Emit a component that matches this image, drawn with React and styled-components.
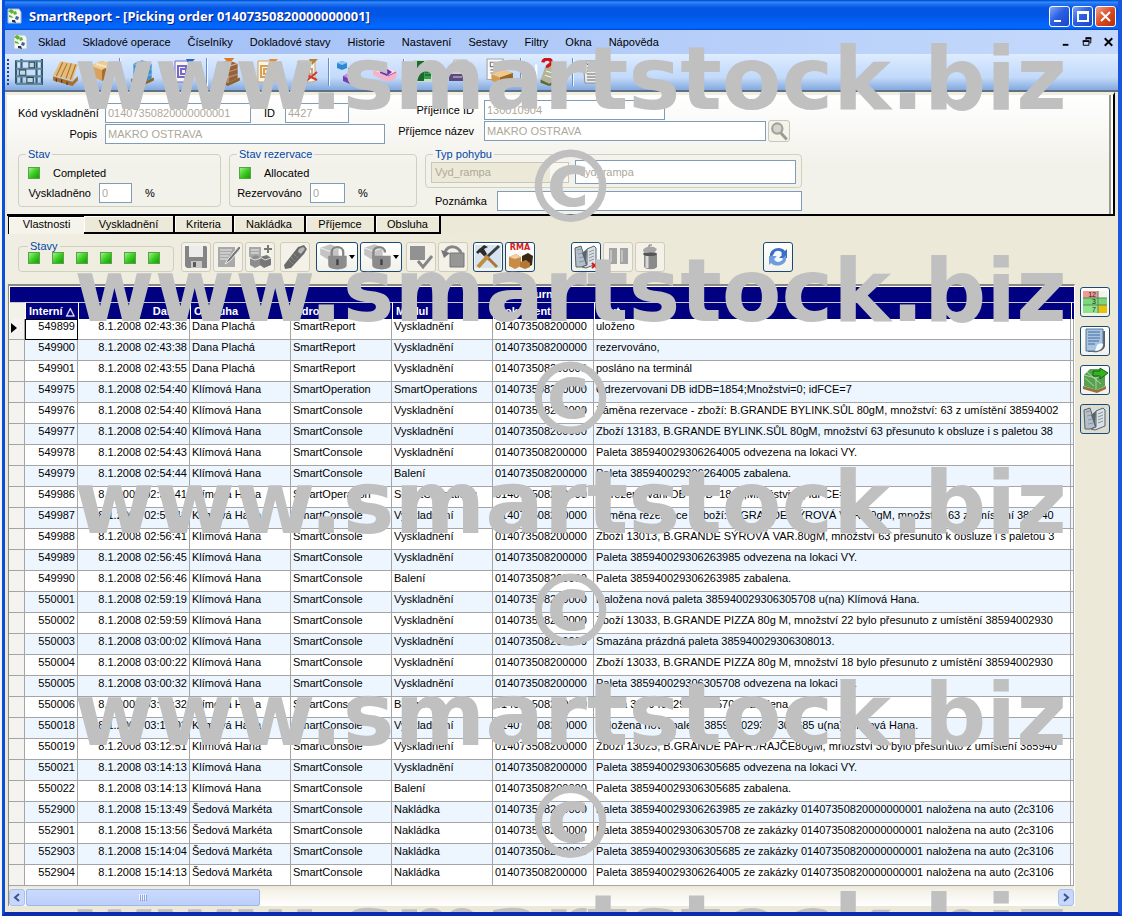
import React from 'react';
import styled, { createGlobalStyle, css } from 'styled-components';

const GlobalStyle = createGlobalStyle`
    * {
        box-sizing: border-box;
    }
    body {
        margin: 0;
        background: #f4f6fb;
        color: #000;
        font-family: 'Liberation Sans', Arial, sans-serif;
        font-size: 11px;
    }
    button, input, select {
        font: inherit;
        color: inherit;
    }
`;

const Window = styled.div`
    position: relative;
    display: flex;
    flex-direction: column;
    min-height: 100vh;
    margin-left: 2px;
    overflow: hidden;
    background: #ece9d8;
    border: solid #0b4fd8;
    border-width: 0 4px 4px 3px;
    border-right-color: #1a56e0;
    border-bottom-color: #0a2cae;
`;

const TitleBar = styled.header`
    display: flex;
    align-items: center;
    height: 30px;
    margin: 0 -3px;
    padding: 2px 5px 0 4px;
    color: #fff;
    background: linear-gradient(#0058d8 0, #0058d8 1px, #3d95ff 2px, #2a7af2 3px, #0355e4 8px, #0256e6 15px, #0268fe 26px, #0267fb 28px, #0044cc 30px);
`;

const Title = styled.h1`
    flex: 1;
    margin: 0 0 0 7px;
    font: bold 13px 'Noto Sans', sans-serif;
    text-shadow: 1px 1px 0 #0a1f84;
    white-space: nowrap;
`;

const CaptionButton = styled.button`
    display: flex;
    width: 21px;
    height: 21px;
    margin-left: 2px;
    padding: 0;
    border: 1px solid #fff;
    border-radius: 3px;
    background: ${props =>
        props.$danger
            ? 'linear-gradient(135deg, #f0a38c, #dc4a22 50%, #b62d0c)'
            : 'linear-gradient(135deg, #7fa8f5, #2a5fe4 45%, #1c45c4)'};
`;

const MenuBar = styled.nav`
    display: flex;
    align-items: center;
    height: 24px;
    padding: 0 0 0 7px;
    background: linear-gradient(90deg, #9ebcf5, #c4d9fb);
`;

const MenuLink = styled.a`
    margin-left: 17px;
    color: #000;
    text-decoration: none;
    white-space: nowrap;

    &:first-of-type {
        margin-left: 10px;
    }
`;

const ChildButtons = styled.div`
    display: flex;
    gap: 2px;
    margin-left: auto;

    button {
        display: flex;
        width: 19px;
        height: 16px;
        padding: 0 2px;
        border: 0;
        background: none;
    }
`;

const Toolbar = styled.div`
    display: flex;
    align-items: center;
    height: 38px;
    padding-left: 2px;
    border-bottom: 2px solid #5d7187;
    background: linear-gradient(#deecff, #cbe0fd 40%, #c3dafa 65%, #84a9de);
`;

const Grip = styled.div`
    width: 3px;
    height: 26px;
    border-left: 2px dotted #27408b;
`;

const ToolGroup = styled.div`
    display: flex;
    justify-content: space-around;
    width: ${props => props.$width}px;
    border-right: ${props => (props.$last ? '0' : '1px solid #6a8ccb')};
    box-shadow: ${props => (props.$last ? 'none' : '1px 0 0 #f1f9ff')};
`;

const ToolButton = styled.button`
    display: flex;
    padding: 0;
    border: 0;
    background: none;
`;

const FormPanel = styled.form`
    display: flex;
    flex-direction: column;
    height: 124px;
    margin: 0 3px 0 2px;
    padding: 5px 0 0 11px;
    border: solid #000;
    border-width: 0 2px 2px 0;
    border-top: 3px solid #f1eee0;
    box-shadow: inset -2px 0 0 #fff, inset -4px 0 0 #9b9a8c;
    background: linear-gradient(#fff, #f2f1ea 60%);
`;

const FormLine = styled.div`
    display: flex;
    height: ${props => props.$height || 20}px;
    margin-bottom: 1px;
    align-items: center;
`;

const StateLine = styled(FormLine)`
    padding: 3px 0 0 2px;
`;

const TopBlock = styled.div`
    display: flex;
    height: 48px;
`;

const LeftColumn = styled.div`
    width: 367px;
    padding-top: 3px;
`;

const BottomBlock = styled.div`
    display: flex;
    gap: 8px;
    height: 64px;
`;

const Label = styled.label`
    flex: none;
    width: ${props => props.$width}px;
    padding-right: ${props => props.$pad || 8}px;
    text-align: right;
    white-space: nowrap;
`;

const Field = styled.input`
    width: ${props => props.$width}px;
    height: ${props => props.$height || 20}px;
    padding: 0 2px;
    border: 1px solid #7f9db9;
    background: #fff;
    color: #aca899;
`;

const TypeSelect = styled.select`
    width: 138px;
    height: 21px;
    margin-right: 6px;
    padding: 0 3px;
    appearance: none;
    opacity: 1;
    border: 1px solid #c9c7ba;
    color: #aca899;
    background: linear-gradient(#f7f6ef, #f7f6ef) right / 18px 100% no-repeat #ece9d8;
`;

const LookupButton = styled.button`
    display: flex;
    align-items: center;
    justify-content: center;
    width: 22px;
    height: 22px;
    margin-left: 2px;
    padding: 0;
    border: 1px solid #c9c7ba;
    border-radius: 3px;
    background: #f5f4ea;
`;

const Group = styled.fieldset`
    flex: none;
    width: ${props => props.$width}px;
    height: ${props => props.$height}px;
    min-width: 0;
    margin: 0;
    padding: 0 ${props => props.$pad || 7}px;
    border: 1px solid #d0d0bf;
    border-radius: 4px;
`;

const Legend = styled.legend`
    margin-left: ${props => props.$shift || 0}px;
    padding: 0 2px;
    line-height: 12px;
    color: #0046a8;
`;

const Led = styled.span`
    flex: none;
    width: 12px;
    height: 12px;
    border: 1px solid #58a348;
    background: linear-gradient(135deg, #9cf28a, #3ccc22 50%, #189c06);
`;

const StateText = styled.span`
    margin-left: 13px;
`;

const TabList = styled.div`
    display: flex;
    height: 18px;
    margin-left: 3px;
`;

const Tab = styled.button`
    width: ${props => props.$width}px;
    padding: 0;
    border: solid #000;
    border-width: 0 2px 2px 0;
    box-shadow: inset 1px 1px 0 #fff;
    background: #ece9d8;

    ${props =>
        props.$active &&
        css`
            padding-bottom: 3px;
            border-width: 1px 0 0 1px;
            background: #f6f4ea;
        `}
`;

const ActionBar = styled.div`
    display: flex;
    align-items: flex-end;
    height: 50px;
    padding: 0 0 12px 13px;
    background: linear-gradient(90deg, #f0eee2, #ece9d8 50%);
`;

const ActionGroup = styled.div`
    display: flex;
    gap: 2px;
    margin-left: ${props => props.$gap}px;
`;

const LedRow = styled.div`
    display: flex;
    gap: 12px;
`;

const IconButton = styled.button`
    display: flex;
    align-items: center;
    justify-content: center;
    width: ${props => (props.$menu ? 42 : 30)}px;
    height: 30px;
    padding: 0;
    border: 1px solid ${props => (props.disabled ? '#cfccbc' : '#1c4a78')};
    border-radius: 3px;
    background: ${props =>
        props.disabled ? '#f4f2e8' : props.$pressed ? '#dcdbd0' : 'linear-gradient(#fff, #f2f1ea)'};
`;

const Work = styled.main`
    display: flex;
    flex: 1;
    padding: 0 8px 6px 3px;
`;

const GridFrame = styled.section`
    flex: 1;
    min-width: 0;
    border: solid #8a8a80;
    border-width: 2px 0 0 1px;
    border-right: 1px solid #fff;
    background: #fff;
`;

const Journal = styled.table`
    width: 100%;
    table-layout: fixed;
    border-collapse: separate;
    border-spacing: 0;
    white-space: nowrap;

    caption {
        height: 16px;
        border: solid #fff;
        border-width: 1px 0 0 1px;
        line-height: 15px;
        font-weight: bold;
        color: #fff;
        background: #000080;
    }
`;

const HeadCell = styled.th`
    height: 17px;
    padding: 0 3px;
    overflow: hidden;
    border-top: 1px solid #c8c8d0;
    border-left: 1px solid #fff;
    line-height: 15px;
    text-align: ${props => props.$align || 'left'};
    color: #fff;
    background: ${props => (props.$blank ? '#f2f1ea' : '#000080')};
`;

const Cell = styled.td`
    height: 21px;
    padding: 0 2px;
    overflow: hidden;
    vertical-align: top;
    line-height: 15px;
    text-align: ${props => props.$align || 'left'};
    border: solid #a5a5a5;
    border-width: 0 1px 1px 0;
    outline: ${props => (props.$current ? '1px solid #000' : 'none')};
    outline-offset: -1px;
    background: ${props => (props.$odd ? '#edf6ff' : '#fff')};
`;

const Selector = styled(Cell)`
    background: #f4f3f0;
    line-height: 20px;
`;

const ScrollTrack = styled.div`
    display: flex;
    height: 20px;
    padding-top: 3px;
    background: linear-gradient(#ece9d8, #f4f2e8 5px, #fff);
`;

const ScrollButton = styled.button`
    width: 16px;
    height: 17px;
    padding: 0;
    display: flex;
    align-items: center;
    justify-content: center;
    border: 1px solid #a8bff0;
    border-radius: 3px;
    background: #c8d8fc;

    &:last-child {
        margin-left: auto;
    }
`;

const Thumb = styled.div`
    display: flex;
    align-items: center;
    justify-content: center;
    width: 22%;
    height: 17px;
    margin-left: 1px;
    border: 1px solid #9db6ee;
    border-radius: 2px;
    background: linear-gradient(#cbdafd, #bccffa);
`;

const SideBar = styled.aside`
    display: flex;
    flex-direction: column;
    gap: 9px;
    padding: 3px 0 0 5px;
`;

const Watermark = styled.div`
    position: absolute;
    z-index: 5;
    top: 26px;
    left: 18px;
    right: 0;
    pointer-events: none;
    text-align: center;
    font: bold 87px/106px 'DejaVu Sans', sans-serif;
    color: #c0c0c0;
`;

const Copyright = styled.div`
    padding-top: 6px;
    font-size: 99px;
    line-height: 100px;
`;

const Icon = ({ size = 26, children }) => (
    <svg width={size} height={size} viewBox="0 0 26 26" fill="none" aria-hidden="true">
        {children}
    </svg>
);

const Logo = () => (
    <svg width="16" height="16" viewBox="0 0 16 16" aria-hidden="true">
        <path d="M2 1h11l2 3v11H2z" fill="#f4f8f0" stroke="#aebbd0" />
        <path d="M2 3l3-2 3 2-2 3zM7 4l3-1 1 3-3 1zM3 7l3 1 1 2-4-1z" fill="#5cb531" />
        <path d="M10 8l3 1-1 3-3-1z" fill="#3c5fa8" />
        <path d="M6 12l3 0 1 3-4-1z" fill="#22355e" />
    </svg>
);

const Rack = () => (
    <Icon size={28}>
        <path d="M1 2v22M6 1v24M20 2v22M25 1v24" stroke="#355b70" strokeWidth="2" />
        <path d="M1 3h24M1 10h24M1 17h24M1 24h24" stroke="#5f8799" strokeWidth="2" />
        <path d="M4 11h6v5H4zM11 18h6v5h-6zM13 4h5v5h-5z" fill="#c4d6df" stroke="#28485b" />
    </Icon>
);

const Pallet = () => (
    <Icon size={28}>
        <path d="M8 3l16 3-5 15L1 16z" fill="#e6bd78" />
        <path d="M10 4L4 17M14 5L8 18M18 5l-5 14M22 6l-5 14" stroke="#a87436" strokeWidth="1" />
        <path d="M1 17l18 5 5-5v4l-5 5L1 21z" fill="#a8702c" />
        <path d="M4 19v3M9 20v3M14 22v3" stroke="#4d2f10" />
    </Icon>
);

const Box = () => (
    <Icon>
        <path d="M2 8l10-5 12 3v11l-11 6-11-5z" fill="#d9a25f" />
        <path d="M2 8l11 4 11-6-12-3z" fill="#f0cb93" />
        <path d="M13 12v11l11-6V6z" fill="#a96c30" />
        <path d="M7 6l11 3v4" stroke="#f6e4bf" strokeWidth="2" />
    </Icon>
);

const Load = ({ color = '#3f8fd0', top }) => (
    <Icon size={28}>
        <path d="M5 5l8-3 9 3v14l-9 4-8-4z" fill={color} />
        <path d="M5 5l8 3v15M13 8l9-3" stroke="#fff" opacity=".5" />
        <path d="M5 10l8 3 9-3M5 15l8 3 9-3" stroke="#d7ecfa" opacity=".4" />
        <path d="M3 19l10 4 11-5v3l-11 5-10-4z" fill="#8b6428" />
        {top && <path d="M9 0h10l-5 5z" fill={top} />}
    </Icon>
);

const Sheet = ({ color, top, mark }) => (
    <Icon>
        <path d="M3 3h17v20l-3 1H3z" fill="#f7f4ea" stroke={color} />
        <path d="M6 8h8v11H6zM9 11h8v5H9z" stroke={color} strokeWidth="2" />
        {top && <path d="M14 1h9l-6 6z" fill={top} />}
        {mark && <path d="M8 15l14 7M22 14L10 24" stroke={mark} strokeWidth="2" />}
    </Icon>
);

const Cubes = () => (
    <Icon>
        <path d="M2 4l5-2 5 2v5l-5 2-5-2z" fill="#2f88d4" />
        <path d="M2 4l5 2 5-2-5-2z" fill="#8cc8f4" />
        <path d="M13 9l5-2 5 2v6l-5 2-5-2z" fill="#5673c8" />
        <path d="M8 17l6-3 9 3v5l-8 3-7-3z" fill="#7b3bb0" />
        <path d="M8 17l6-3 9 3-8 3z" fill="#c18ce4" />
    </Icon>
);

const Eraser = () => (
    <Icon>
        <path d="M1 11l8-5 16 7-1 6-8 4L1 16z" fill="#f3b3c8" />
        <path d="M1 11l8-5 16 7-8 4z" fill="#ffe1e6" />
        <path d="M8 11l6-2 6 4-5 4-7-3z" fill="#6f35b8" />
        <path d="M16 17l8-4" stroke="#b04c86" />
    </Icon>
);

const Door = () => (
    <Icon>
        <path d="M3 2h19v22H3z" fill="#c9dcc9" />
        <path d="M7 3h7v20H7z" fill="#176c2b" />
        <path d="M14 9h7v12h-7z" fill="#35a24a" />
        <path d="M15 11h3v3h-3zM15 17h6" stroke="#0c4a1b" />
    </Icon>
);

const Printer = () => (
    <Icon>
        <path d="M6 2h13l2 8H4z" fill="#f1f1ee" stroke="#b8b4b0" />
        <path d="M1 12l5-3h14l5 3v10H1z" fill="#d7c9cc" />
        <path d="M1 16h24v7H1z" fill="#5b4a7c" />
        <path d="M5 19h9" stroke="#d7d2e8" />
    </Icon>
);

const BoxSheet = () => (
    <Icon size={28}>
        <path d="M1 1h15v19H1z" fill="#fafafa" stroke="#a5a5a5" />
        <path d="M4 4h5v4H4zM4 11h8M4 14h7M11 5h3" stroke="#777" />
        <path d="M5 15l8-5 12 4v6l-12 5-8-4z" fill="#d49a52" />
        <path d="M5 15l8-5 12 4-12 4z" fill="#efc98c" />
        <path d="M13 18v7l12-5v-6z" fill="#9c6524" />
    </Icon>
);

const Question = () => (
    <Icon size={28}>
        <path d="M11 9l6-2 7 5v8l-9 5-8-4z" fill="#b3b39a" />
        <path d="M7 20l8 4 10-5v3l-10 4-8-3z" fill="#5c6b2e" />
        <path d="M12 12l10 3M11 16l10 3" stroke="#f2f2e0" />
        <path d="M9 4c1-4 8-4 8 0 0 3-4 2-4 5" stroke="#d01414" strokeWidth="3" />
        <path d="M3 6v13" stroke="#fff" strokeWidth="2" />
    </Icon>
);

const Report = () => (
    <Icon>
        <path d="M3 2h18v22H5z" fill="#ededed" stroke="#8f8f8f" />
        <path d="M5 2l3 4 3-4M14 2l3 4 3-4" stroke="#555" />
        <path d="M7 9h11M7 12h11M7 15h11M7 18h11M7 21h9" stroke="#666" />
    </Icon>
);

const Floppy = () => (
    <Icon>
        <path d="M2 2h21l1 1v21H4l-2-2z" fill="#858585" />
        <path d="M6 2h14v11H6z" fill="#ececec" />
        <path d="M8 17h11v7H8z" fill="#c7c7c7" />
        <path d="M10 18h3v5h-3z" fill="#5b5b5b" />
    </Icon>
);

const EditPage = () => (
    <Icon>
        <path d="M3 3h17v20H3z" fill="#a9a9a9" />
        <path d="M5 6h12M5 9h11M5 12h9M5 15h7" stroke="#ececec" />
        <path d="M24 2L13 15l-3 5 5-3L26 4z" fill="#777" stroke="#eee" />
    </Icon>
);

const AddBox = () => (
    <Icon>
        <path d="M2 3h12v10H2z" fill="#a8a8a8" />
        <path d="M4 6h8M4 9h8" stroke="#eee" />
        <path d="M3 14l6-3 5 3v7l-6 3-5-3z" fill="#8d8d8d" />
        <path d="M13 13l7-2 4 3v7l-7 3-4-3z" fill="#777" />
        <path d="M3 14l5 2 6-2M13 13l5 3 6-2" stroke="#ddd" />
        <path d="M21 1v8M17 5h8" stroke="#777" strokeWidth="2" />
    </Icon>
);

const Scanner = () => (
    <Icon>
        <path d="M16 3l6-2 3 4-3 5L9 24l-6 1-1-4z" fill="#6b6b6b" />
        <path d="M17 5l4-2 2 2-4 5-3-2z" fill="#b8b8b8" />
        <path d="M12 10l4 4M9 13l4 4M7 16l4 4" stroke="#a0a0a0" strokeDasharray="1 1" />
    </Icon>
);

const Lock = ({ open }) => (
    <Icon size={30}>
        <path d="M1 5l9-3 7 3v8l-8 3-8-5z" fill="#c4c4c4" />
        <path d="M1 5l8 3 8-3" stroke="#eee" />
        <path d={open ? 'M9 14V9c0-6 10-6 10 0' : 'M11 14V9c0-6 10-6 10 0v5'} stroke="#858585" strokeWidth="2" />
        <path d="M8 12h16v8c0 5-16 5-16 0z" fill="#8c8c8c" />
        <path d="M16 15v5" stroke="#3f3f3f" strokeWidth="2" />
    </Icon>
);

const Arrow = () => (
    <svg width="6" height="4" viewBox="0 0 6 4" aria-hidden="true">
        <path d="M0 0h6L3 4z" fill="#000" />
    </svg>
);

const Confirm = () => (
    <Icon>
        <path d="M2 2h15v14H2z" fill="#929292" />
        <path d="M10 17l5 6 9-11" stroke="#858585" strokeWidth="3" />
    </Icon>
);

const Unlock = () => (
    <Icon>
        <path d="M10 9h14v14H10z" fill="#969696" stroke="#777" />
        <path d="M21 9C18 1 8 1 5 8" stroke="#858585" strokeWidth="3" />
        <path d="M1 6l3 8 6-5z" fill="#777" />
    </Icon>
);

const Tools = () => (
    <Icon>
        <path d="M0 1h26v23H0z" fill="#d6e4f2" />
        <path d="M4 5l18 18" stroke="#a87834" strokeWidth="3" />
        <path d="M24 2L12 13" stroke="#3a3f44" strokeWidth="3" />
        <path d="M13 12L3 23" stroke="#c08e3e" strokeWidth="4" />
        <path d="M1 8l8-7 4 2-4 2 3 5-3 2-4-4-2 2z" fill="#2b2b2b" />
    </Icon>
);

const RmaWrap = styled.span`
    display: flex;
    flex-direction: column;
    align-items: center;
    font: bold 8px/8px 'DejaVu Sans', sans-serif;
    color: #d42020;
`;

const Rma = () => (
    <RmaWrap>
        RMA
        <svg width="27" height="18" viewBox="0 0 27 18" aria-hidden="true">
            <path d="M2 5l7-3 5 3v9l-6 3-6-3z" fill="#c98c48" />
            <path d="M2 5l6 2 6-2-5-3z" fill="#f0cfa0" />
            <path d="M15 4l6-3 5 3-1 9-6 3-4-3z" fill="#3a2817" />
            <path d="M13 10l6-2 4 3v4l-5 2-5-2z" fill="#b57736" />
        </svg>
    </RmaWrap>
);

const Pages = ({ mark }) => (
    <Icon>
        <path d="M2 4l6-2 6 19-6 2H3z" fill="#b3bfca" stroke="#59636b" />
        <path d="M14 5l7-3 2 2v16l-10 4-4-1 5-2z" fill="#dbe2e7" stroke="#59636b" />
        <path d="M14 5l-1 16-4-12z" fill="#5a646d" />
        <path d="M16 8l5-2M16 11l5-2M16 14l5-2M16 17l5-2M4 6l4-1M5 10l4-1M6 14l4-1M6 18l5-1" stroke="#8a949c" />
        {mark && <path d="M19 19l5 5M24 19l-5 5" stroke="#d51b1b" strokeWidth="2" />}
    </Icon>
);

const Columns = () => (
    <Icon>
        <path d="M4 4h8v16H4zM15 4h8v16h-8z" fill="#a3a3a3" />
        <path d="M6 6v12M17 6v12" stroke="#c4c4c4" strokeWidth="2" />
    </Icon>
);

const Bin = () => (
    <Icon>
        <path d="M7 10h13v13c-2 3-11 3-13 0z" fill="#8a8a8a" />
        <path d="M10 12v12" stroke="#d8d8d8" strokeWidth="3" />
        <ellipse cx="13" cy="10" rx="7" ry="2" fill="#555" />
        <path d="M6 6c2-4 10-5 14-1l-2 3-11 1z" fill="#a6a6a6" />
        <path d="M12 3V1h3" stroke="#777" />
    </Icon>
);

const Refresh = () => (
    <Icon>
        <path d="M5 11c0-6 10-10 15-4l2-2v9h-8l3-3c-3-4-7-3-9 0l-3 5z" fill="#3a6fc4" />
        <path d="M21 15c0 6-10 9-15 4l-2 2v-9h8l-3 3c2 4 6 3 8 0l4-4z" fill="#6f9be0" />
        <path d="M9 9c2-3 6-3 8 0l-4 5 5 1c-2 3-5 4-8 1l2-4z" fill="#f4f9ff" />
    </Icon>
);

const Magnifier = () => (
    <Icon size={19}>
        <path d="M14 14l9 10" stroke="#9b9b94" strokeWidth="4" />
        <circle cx="10" cy="9" r="7" fill="#d5d5d0" stroke="#a3a39c" strokeWidth="3" />
    </Icon>
);

const Planner = () => (
    <Icon>
        <path d="M1 2h15v7H1z" fill="#ee9a95" />
        <path d="M1 9h24v7H1z" fill="#7cd77a" />
        <path d="M1 16h15v8H1z" fill="#8fe38b" />
        <path d="M16 16h9v8h-9z" fill="#e4c30a" />
        <path d="M16 2h9v7h-9z" fill="#f3f3ee" />
        <path d="M1 9h24M1 16h24M16 2v22" stroke="#5b8758" />
        <text x="14" y="8" fontSize="7" textAnchor="end" fill="#222">12</text>
        <text x="14" y="15" fontSize="7" textAnchor="end" fill="#222">3</text>
        <text x="14" y="23" fontSize="7" textAnchor="end" fill="#222">7</text>
    </Icon>
);

const Document = () => (
    <Icon>
        <path d="M6 3h17v15c-1 5-8 7-12 6H6z" fill="#5c6166" />
        <path d="M4 1h17v16c0 4-4 6-7 6H4z" fill="#a9c4e3" stroke="#5a7494" />
        <path d="M6 4h12M6 7h12M6 10h12M6 13h11M6 16h7" stroke="#416b9c" />
        <path d="M21 16c-2-1-5 0-6 1l-2 6c5 0 8-3 8-7z" fill="#f6f9fc" />
    </Icon>
);

const Dispatch = () => (
    <Icon>
        <path d="M2 8l6-6h11l4 5v12l-8 4-13-4z" fill="#57a151" />
        <path d="M2 8l12 3v11M14 11l9-4M3 11l9 8M5 5l14 12" stroke="#cde9c5" opacity=".7" />
        <path d="M1 19l14 4 9-4v3l-9 4-14-4z" fill="#94733e" />
        <path d="M11 4h7V1l8 5-8 6V9h-7z" fill="#35b221" stroke="#14660c" />
    </Icon>
);

const CaptionIcon = ({ path }) => (
    <svg width="19" height="19" viewBox="0 0 19 19" fill="none" aria-hidden="true">
        <path d={path} stroke="#fff" strokeWidth="2" />
    </svg>
);

const MENU = [
    'Sklad', 'Skladové operace', 'Číselníky', 'Dokladové stavy', 'Historie',
    'Nastavení', 'Sestavy', 'Filtry', 'Okna', 'Nápověda'
];

const TOOLS = [
    { width: 110, items: [<Rack />, <Pallet />, <Box />] },
    { width: 87, items: [<Load />, <Sheet color="#7567cf" top="#2868b8" />] },
    { width: 122, items: [<Load color="#9a6138" top="#e27a1c" />, <Sheet color="#d7a052" top="#e88a2a" />, <Sheet color="#c9a57c" top="#b98032" mark="#cc3a30" />] },
    { width: 75, items: [<Cubes />, <Eraser />] },
    { width: 117, items: [<Door />, <Printer />, <BoxSheet />] },
    { width: 52, items: [<Question />] },
    { width: 40, items: [<Report />] }
];

const TABS = [
    ['Vlastnosti', 76], ['Vyskladnění', 91], ['Kriteria', 59],
    ['Nakládka', 72], ['Příjemce', 70], ['Obsluha', 65]
];

const HANA = 'Klímová Hana';
const MARKETA = 'Šedová Markéta';
const CONSOLE = 'SmartConsole';
const OUT = 'Vyskladnění';
const DOCUMENT = '014073508200000';

const ROWS = [
    ['549899', '02:43:36', 'Dana Plachá', 'SmartReport', OUT, 'uloženo'],
    ['549900', '02:43:38', 'Dana Plachá', 'SmartReport', OUT, 'rezervováno,'],
    ['549901', '02:43:55', 'Dana Plachá', 'SmartReport', OUT, 'posláno na terminál'],
    ['549975', '02:54:40', HANA, 'SmartOperation', 'SmartOperations', 'Odrezervovani DB idDB=1854;Množstvi=0; idFCE=7'],
    ['549976', '02:54:40', HANA, CONSOLE, OUT, 'Záměna rezervace - zboží: B.GRANDE BYLINK.SŮL 80gM, množství: 63 z umístění 38594002'],
    ['549977', '02:54:40', HANA, CONSOLE, OUT, 'Zboží 13183, B.GRANDE BYLINK.SŮL 80gM, množství 63 přesunuto k obsluze i s paletou 38'],
    ['549978', '02:54:43', HANA, CONSOLE, OUT, 'Paleta 385940029306264005 odvezena na lokaci VY.'],
    ['549979', '02:54:44', HANA, CONSOLE, 'Balení', 'Paleta 385940029306264005 zabalena.'],
    ['549986', '02:56:41', HANA, 'SmartOperation', 'SmartOperations', 'Odrezervovani DB idDB=1845;Množstvi=0; idFCE=7'],
    ['549987', '02:56:41', HANA, CONSOLE, OUT, 'Záměna rezervace - zboží: B.GRANDE SÝROVÁ VAR.80gM, množství: 63 z umístění 385940'],
    ['549988', '02:56:41', HANA, CONSOLE, OUT, 'Zboží 13013, B.GRANDE SÝROVÁ VAR.80gM, množství 63 přesunuto k obsluze i s paletou 3'],
    ['549989', '02:56:45', HANA, CONSOLE, OUT, 'Paleta 385940029306263985 odvezena na lokaci VY.'],
    ['549990', '02:56:46', HANA, CONSOLE, 'Balení', 'Paleta 385940029306263985 zabalena.'],
    ['550001', '02:59:19', HANA, CONSOLE, OUT, 'Naložena nová paleta 385940029306305708 u(na) Klímová Hana.'],
    ['550002', '02:59:59', HANA, CONSOLE, OUT, 'Zboží 13033, B.GRANDE PIZZA 80g M, množství 22 bylo přesunuto z umístění 38594002930'],
    ['550003', '03:00:02', HANA, CONSOLE, OUT, 'Smazána prázdná paleta 385940029306308013.'],
    ['550004', '03:00:22', HANA, CONSOLE, OUT, 'Zboží 13033, B.GRANDE PIZZA 80g M, množství 18 bylo přesunuto z umístění 38594002930'],
    ['550005', '03:00:32', HANA, CONSOLE, OUT, 'Paleta 385940029306305708 odvezena na lokaci VY.'],
    ['550006', '03:00:32', HANA, CONSOLE, 'Balení', 'Paleta 385940029306305708 zabalena.'],
    ['550018', '03:12:02', HANA, CONSOLE, OUT, 'Založena nová paleta 385940029306305685 u(na) Klímová Hana.'],
    ['550019', '03:12:51', HANA, CONSOLE, OUT, 'Zboží 13023, B.GRANDE PAPR./RAJČE80gM, množství 30 bylo přesunuto z umístění 385940'],
    ['550021', '03:14:13', HANA, CONSOLE, OUT, 'Paleta 385940029306305685 odvezena na lokaci VY.'],
    ['550022', '03:14:13', HANA, CONSOLE, 'Balení', 'Paleta 385940029306305685 zabalena.'],
    ['552900', '15:13:49', MARKETA, CONSOLE, 'Nakládka', 'Paleta 385940029306263985 ze zakázky 01407350820000000001 naložena na auto (2c3106'],
    ['552901', '15:13:56', MARKETA, CONSOLE, 'Nakládka', 'Paleta 385940029306305708 ze zakázky 01407350820000000001 naložena na auto (2c3106'],
    ['552903', '15:14:04', MARKETA, CONSOLE, 'Nakládka', 'Paleta 385940029306305685 ze zakázky 01407350820000000001 naložena na auto (2c3106'],
    ['552904', '15:14:13', MARKETA, CONSOLE, 'Nakládka', 'Paleta 385940029306264005 ze zakázky 01407350820000000001 naložena na auto (2c3106']
];

const HeaderForm = () => (
    <FormPanel>
        <TopBlock>
            <LeftColumn>
                <FormLine>
                    <Label htmlFor="code" $width={87}>Kód vyskladnění</Label>
                    <Field id="code" $width={146} defaultValue="01407350820000000001" disabled />
                    <Label htmlFor="orderId" $width={34} $pad={10}>ID</Label>
                    <Field id="orderId" $width={64} defaultValue="4427" disabled />
                </FormLine>
                <FormLine>
                    <Label htmlFor="description" $width={87}>Popis</Label>
                    <Field id="description" $width={280} defaultValue="MAKRO OSTRAVA" disabled />
                </FormLine>
            </LeftColumn>
            <div>
                <FormLine>
                    <Label htmlFor="receiverId" $width={99} $pad={10}>Příjemce ID</Label>
                    <Field id="receiverId" $width={181} defaultValue="130010904" disabled />
                </FormLine>
                <FormLine>
                    <Label htmlFor="receiverName" $width={99} $pad={10}>Příjemce název</Label>
                    <Field id="receiverName" $width={282} defaultValue="MAKRO OSTRAVA" disabled />
                    <LookupButton type="button" aria-label="Příjemce" disabled><Magnifier /></LookupButton>
                </FormLine>
            </div>
        </TopBlock>
        <BottomBlock>
            <Group $width={203} $height={59}>
                <Legend>Stav</Legend>
                <StateLine $height={22}><Led /><StateText>Completed</StateText></StateLine>
                <FormLine>
                    <Label htmlFor="picked" $width={73}>Vyskladněno</Label>
                    <Field id="picked" $width={33} defaultValue="0" disabled />
                    <StateText>%</StateText>
                </FormLine>
            </Group>
            <Group $width={188} $height={59}>
                <Legend>Stav rezervace</Legend>
                <StateLine $height={22}><Led /><StateText>Allocated</StateText></StateLine>
                <FormLine>
                    <Label htmlFor="reserved" $width={73}>Rezervováno</Label>
                    <Field id="reserved" $width={35} defaultValue="0" disabled />
                    <StateText>%</StateText>
                </FormLine>
            </Group>
            <div>
                <Group $width={377} $height={40} $pad={5}>
                    <Legend $shift={2}>Typ pohybu</Legend>
                    <FormLine $height={24}>
                        <TypeSelect aria-label="Typ pohybu" disabled defaultValue="Vyd_rampa">
                            <option>Vyd_rampa</option>
                        </TypeSelect>
                        <Field aria-label="Typ pohybu název" $width={221} $height={24} defaultValue="Vyd_rampa" disabled />
                    </FormLine>
                </Group>
                <FormLine $height={26}>
                    <Label htmlFor="note" $width={72} $pad={10}>Poznámka</Label>
                    <Field id="note" $width={305} disabled />
                </FormLine>
            </div>
        </BottomBlock>
    </FormPanel>
);

const Actions = () => (
    <ActionBar>
        <Group $width={156} $height={32} $pad={9}>
            <Legend>Stavy</Legend>
            <LedRow>
                {[0, 1, 2, 3, 4, 5].map(led => <Led key={led} />)}
            </LedRow>
        </Group>
        <ActionGroup $gap={7}>
            <IconButton aria-label="Uložit" disabled><Floppy /></IconButton>
            <IconButton aria-label="Upravit" disabled><EditPage /></IconButton>
            <IconButton aria-label="Přidat" disabled><AddBox /></IconButton>
        </ActionGroup>
        <ActionGroup $gap={5}>
            <IconButton aria-label="Terminál" disabled><Scanner /></IconButton>
        </ActionGroup>
        <ActionGroup $gap={6}>
            <IconButton aria-label="Rezervovat" $menu><Lock /><Arrow /></IconButton>
            <IconButton aria-label="Odrezervovat" $menu><Lock open /><Arrow /></IconButton>
        </ActionGroup>
        <ActionGroup $gap={4}>
            <IconButton aria-label="Potvrdit" disabled><Confirm /></IconButton>
            <IconButton aria-label="Odemknout" disabled><Unlock /></IconButton>
        </ActionGroup>
        <ActionGroup $gap={5}>
            <IconButton aria-label="Nástroje"><Tools /></IconButton>
            <IconButton><Rma /></IconButton>
        </ActionGroup>
        <ActionGroup $gap={36}>
            <IconButton aria-label="Zrušit doklad"><Pages mark /></IconButton>
            <IconButton aria-label="Sloupce" disabled><Columns /></IconButton>
            <IconButton aria-label="Smazat" disabled><Bin /></IconButton>
        </ActionGroup>
        <ActionGroup $gap={98}>
            <IconButton aria-label="Obnovit"><Refresh /></IconButton>
        </ActionGroup>
    </ActionBar>
);

const JournalGrid = () => (
    <GridFrame>
        <Journal>
            <caption>Journal</caption>
            <colgroup>
                <col width="16" />
                <col width="53" />
                <col width="112" />
                <col width="101" />
                <col width="101" />
                <col width="101" />
                <col width="101" />
                <col />
                <col width="3" />
            </colgroup>
            <thead>
                <tr>
                    <HeadCell $blank />
                    <HeadCell>Interní △</HeadCell>
                    <HeadCell $align="right">Datum</HeadCell>
                    <HeadCell>Obsluha</HeadCell>
                    <HeadCell>Zdroj</HeadCell>
                    <HeadCell>Modul</HeadCell>
                    <HeadCell>Dokument</HeadCell>
                    <HeadCell>Text</HeadCell>
                    <HeadCell />
                </tr>
            </thead>
            <tbody>
                {ROWS.map(([id, time, user, source, module, text], index) => {
                    const odd = index % 2 === 1;
                    return (
                        <tr key={id}>
                            <Selector>
                                {index === 0 && (
                                    <svg width="6" height="10" viewBox="0 0 6 10" aria-hidden="true">
                                        <path d="M0 0l6 5-6 5z" fill="#000" />
                                    </svg>
                                )}
                            </Selector>
                            <Cell $odd={odd} $align="right" $current={index === 0}>{id}</Cell>
                            <Cell $odd={odd} $align="right">8.1.2008 {time}</Cell>
                            <Cell $odd={odd}>{user}</Cell>
                            <Cell $odd={odd}>{source}</Cell>
                            <Cell $odd={odd}>{module}</Cell>
                            <Cell $odd={odd}>{DOCUMENT}</Cell>
                            <Cell $odd={odd}>{text}</Cell>
                            <Cell $odd={odd} />
                        </tr>
                    );
                })}
            </tbody>
        </Journal>
        <ScrollTrack>
            <ScrollButton aria-label="Doleva">
                <svg width="8" height="9" viewBox="0 0 8 9" fill="none">
                    <path d="M6 1L2 4.500 6 8" stroke="#3d5585" strokeWidth="2" />
                </svg>
            </ScrollButton>
            <Thumb>
                <svg width="8" height="7" viewBox="0 0 8 7" aria-hidden="true">
                    <path d="M.5 0v6M2.500 0v6M4.500 0v6M6.500 0v6" stroke="#eef4fe" />
                    <path d="M1.500 1v6M3.500 1v6M5.500 1v6M7.500 1v6" stroke="#8ca5dc" />
                </svg>
            </Thumb>
            <ScrollButton aria-label="Doprava">
                <svg width="8" height="9" viewBox="0 0 8 9" fill="none">
                    <path d="M2 1l4 3.500L2 8" stroke="#3d5585" strokeWidth="2" />
                </svg>
            </ScrollButton>
        </ScrollTrack>
    </GridFrame>
);

const App = () => (
    <>
        <GlobalStyle />
        <Window>
            <TitleBar>
                <Logo />
                <Title>SmartReport - [Picking order 01407350820000000001]</Title>
                <CaptionButton aria-label="Minimalizovat"><CaptionIcon path="M4 14h7" /></CaptionButton>
                <CaptionButton aria-label="Maximalizovat"><CaptionIcon path="M5 5h10v9H5zM4 6h12" /></CaptionButton>
                <CaptionButton aria-label="Zavřít" $danger><CaptionIcon path="M5 5l9 9M14 5l-9 9" /></CaptionButton>
            </TitleBar>
            <MenuBar>
                <Logo />
                {MENU.map(item => <MenuLink key={item} href="#">{item}</MenuLink>)}
                <ChildButtons>
                    <button type="button" aria-label="Minimalizovat okno">
                        <svg width="16" height="16" viewBox="0 0 16 16"><path d="M4 10h6v2H4z" /></svg>
                    </button>
                    <button type="button" aria-label="Obnovit okno">
                        <svg width="16" height="16" viewBox="0 0 16 16" fill="none" stroke="#000">
                            <path d="M3.500 7v4.500h6V7M3 7h7M6.500 6V4h5v5H10M6 4h6" />
                            <path d="M3 7h7M6 4h6" strokeWidth="2" />
                        </svg>
                    </button>
                    <button type="button" aria-label="Zavřít okno">
                        <svg width="16" height="16" viewBox="0 0 16 16"><path d="M4 4l8 8M12 4l-8 8" stroke="#000" strokeWidth="2" /></svg>
                    </button>
                </ChildButtons>
            </MenuBar>
            <Toolbar>
                <Grip />
                {TOOLS.map((group, index) => (
                    <ToolGroup key={group.width} $width={group.width} $last={index === TOOLS.length - 1}>
                        {group.items.map((icon, i) => (
                            <ToolButton key={i} type="button" aria-label={`Nástroj ${index + 1}.${i + 1}`}>
                                {icon}
                            </ToolButton>
                        ))}
                    </ToolGroup>
                ))}
            </Toolbar>
            <HeaderForm />
            <TabList role="tablist">
                {TABS.map(([name, width], index) => (
                    <Tab key={name} role="tab" aria-selected={index === 0} $width={width} $active={index === 0}>
                        {name}
                    </Tab>
                ))}
            </TabList>
            <Actions />
            <Work>
                <JournalGrid />
                <SideBar>
                    <IconButton aria-label="Plán"><Planner /></IconButton>
                    <IconButton aria-label="Dokument"><Document /></IconButton>
                    <IconButton aria-label="Expedice"><Dispatch /></IconButton>
                    <IconButton aria-label="Stránky" $pressed><Pages /></IconButton>
                </SideBar>
            </Work>
            <Watermark aria-hidden="true">
                {[0, 1, 2, 3, 4].map(line => (
                    <React.Fragment key={line}>
                        <div>www.smartstock.biz</div>
                        {line < 4 && <Copyright>©</Copyright>}
                    </React.Fragment>
                ))}
            </Watermark>
        </Window>
    </>
);

export default App;
